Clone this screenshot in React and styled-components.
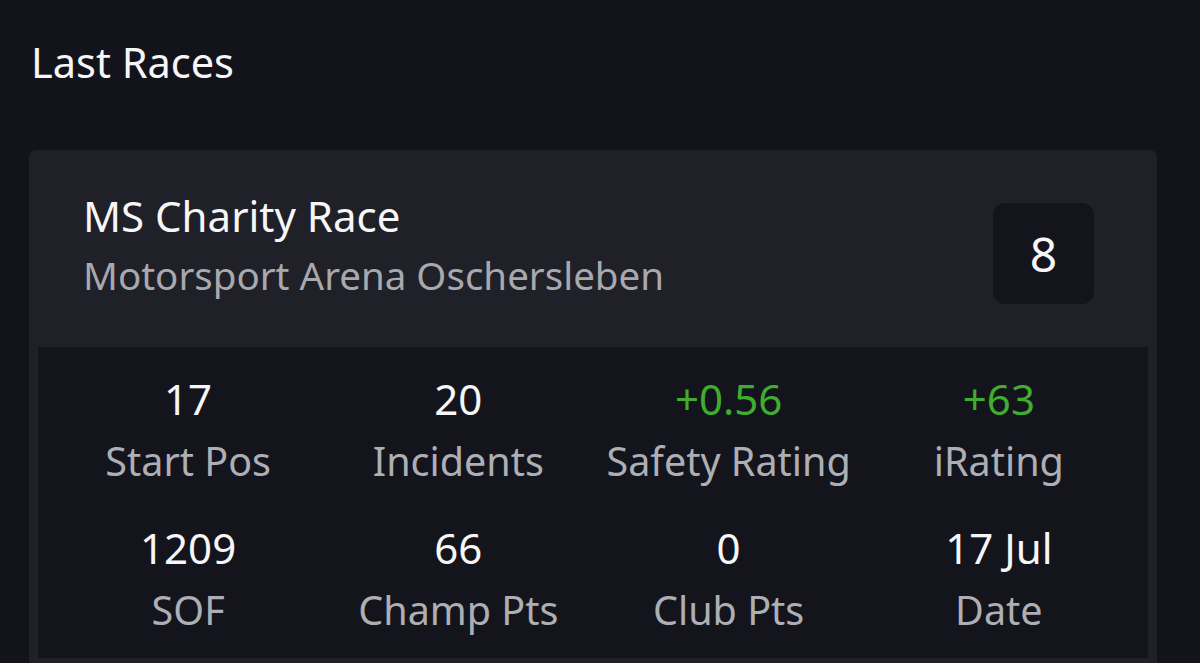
import React from "react";
import styled, { createGlobalStyle } from "styled-components";

const Global = createGlobalStyle`
  html, body { margin: 0; padding: 0; background: #13141b; }
  body { font-family: "Noto Sans", "Open Sans", sans-serif; color: #f4f4f6; }
`;

const Page = styled.div`
  padding: 37px 43px 0 29px;
  height: 663px;
  box-sizing: border-box;
  overflow: hidden;
`;

const Heading = styled.h1`
  margin: 0 0 0 2px;
  font-size: 41.5px;
  font-weight: 400;
  line-height: 50px;
  color: #f6f6f8;
`;

const Card = styled.section`
  margin-top: 63px;
  background: #1f2028;
  border-radius: 7px;
  padding: 9px 9px 12px 9px;
`;

const Header = styled.div`
  display: flex;
  align-items: flex-start;
  justify-content: space-between;
  padding: 32px 54px 43px 45px;
`;

const TitleBlock = styled.div`
  display: flex;
  flex-direction: column;
`;

const RaceName = styled.div`
  font-size: 42px;
  line-height: 50px;
  color: #f6f6f8;
`;

const Track = styled.div`
  margin-top: 6px;
  font-size: 38.5px;
  line-height: 56px;
  color: #a8a9ae;
`;

const Badge = styled.div`
  margin-top: 12px;
  width: 101px;
  height: 101px;
  border-radius: 12px;
  background: #14151c;
  display: flex;
  align-items: center;
  justify-content: center;
  font-size: 48px;
  line-height: 1;
  color: #f6f6f8;
`;

const Stats = styled.div`
  background: #14151c;
  display: grid;
  grid-template-columns: repeat(4, 1fr);
  row-gap: 25px;
  padding: 22px 14px 16px 15px;
`;

const Stat = styled.div`
  display: flex;
  flex-direction: column;
  align-items: center;
`;

const Value = styled.div`
  font-size: 42px;
  line-height: 60px;
  color: ${(p) => (p.$positive ? "#3fae2f" : "#f6f6f8")};
`;

const Label = styled.div`
  font-size: 39.5px;
  line-height: 64px;
  color: #aeafb4;
`;

const stats = [
  { value: "17", label: "Start Pos" },
  { value: "20", label: "Incidents" },
  { value: "+0.56", label: "Safety Rating", positive: true },
  { value: "+63", label: "iRating", positive: true },
  { value: "1209", label: "SOF" },
  { value: "66", label: "Champ Pts" },
  { value: "0", label: "Club Pts" },
  { value: "17 Jul", label: "Date" },
];

export default function App() {
  return (
    <>
      <Global />
      <Page>
        <Heading>Last Races</Heading>
        <Card>
          <Header>
            <TitleBlock>
              <RaceName>MS Charity Race</RaceName>
              <Track>Motorsport Arena Oschersleben</Track>
            </TitleBlock>
            <Badge>8</Badge>
          </Header>
          <Stats>
            {stats.map((s) => (
              <Stat key={s.label}>
                <Value $positive={s.positive}>{s.value}</Value>
                <Label>{s.label}</Label>
              </Stat>
            ))}
          </Stats>
        </Card>
      </Page>
    </>
  );
}
